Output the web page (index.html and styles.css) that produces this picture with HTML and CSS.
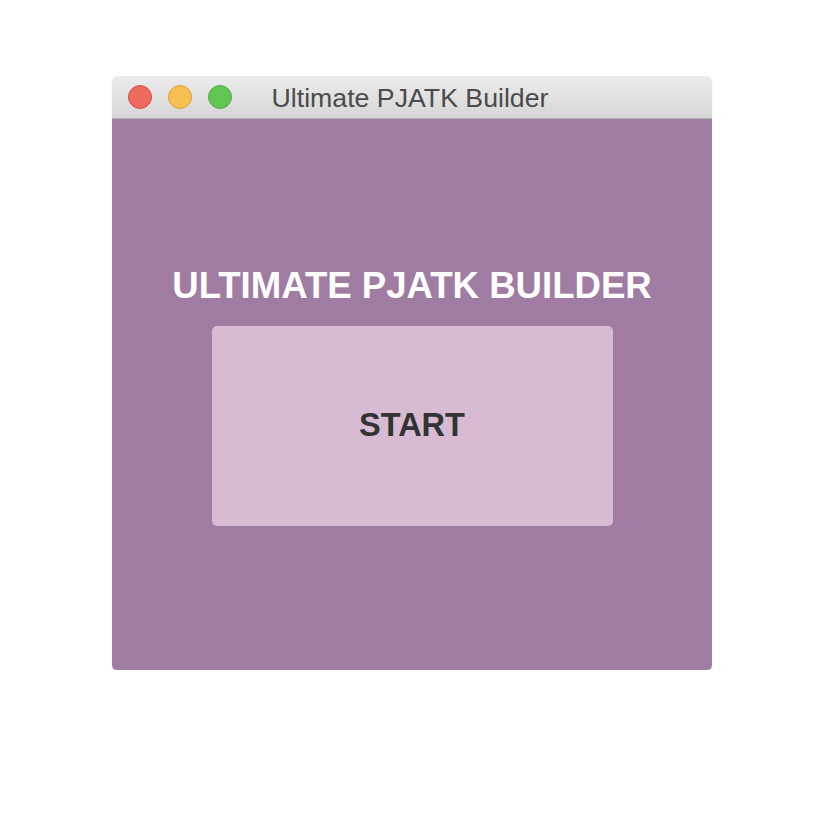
FILE: index.html
```html
<!DOCTYPE html>
<html>
<head>
<meta charset="utf-8">
<link rel="stylesheet" href="styles.css">
</head>
<body>
<div class="window">
  <div class="titlebar">
    <div class="lights">
      <span class="light red"></span>
      <span class="light yellow"></span>
      <span class="light green"></span>
    </div>
    <div class="title">Ultimate PJATK Builder</div>
  </div>
  <div class="content">
    <h1 class="heading">ULTIMATE PJATK BUILDER</h1>
    <button class="start">START</button>
  </div>
</div>
</body>
</html>
```
FILE: styles.css
```css
html, body {
  margin: 0;
  background: #ffffff;
}
body {
  padding: 76px 0 0 112px;
  font-family: "Liberation Sans", Arial, sans-serif;
}
.window {
  width: 600px;
  border-radius: 6px 6px 5px 5px;
  overflow: hidden;
  box-shadow: 0 1px 1px rgba(0,0,0,0.25);
}
.titlebar {
  position: relative;
  height: 42px;
  background: linear-gradient(#ececec, #d6d6d6);
  border-bottom: 1px solid #b3b3b3;
  display: flex;
  align-items: center;
}
.lights {
  display: flex;
  gap: 16px;
  padding-left: 16px;
}
.light {
  width: 22px;
  height: 22px;
  border-radius: 50%;
  display: block;
}
.red { background: #ee6a5f; border: 1px solid #d55048; }
.yellow { background: #f6bf4f; border: 1px solid #d9a23a; }
.green { background: #62c655; border: 1px solid #4fa940; }
.title {
  position: absolute;
  left: 0;
  right: 0;
  top: 0;
  height: 42px;
  line-height: 44px;
  text-align: center;
  font-size: 26.7px;
  color: #4b4b4b;
  margin-left: -4px;
}
.content {
  height: 551px;
  background: #a07ca3;
  display: flex;
  flex-direction: column;
  align-items: center;
  justify-content: center;
  gap: 20px;
  padding-top: 2px;
  box-sizing: border-box;
}
.heading {
  margin: 0;
  font-size: 36.6px;
  font-weight: bold;
  color: #ffffff;
  line-height: 40px;
}
.start {
  width: 401px;
  height: 200px;
  border: none;
  border-radius: 5px;
  background: #d7bbd3;
  font-family: "Liberation Sans", Arial, sans-serif;
  font-weight: bold;
  font-size: 32.5px;
  color: #333333;
  padding: 0;
}
```
